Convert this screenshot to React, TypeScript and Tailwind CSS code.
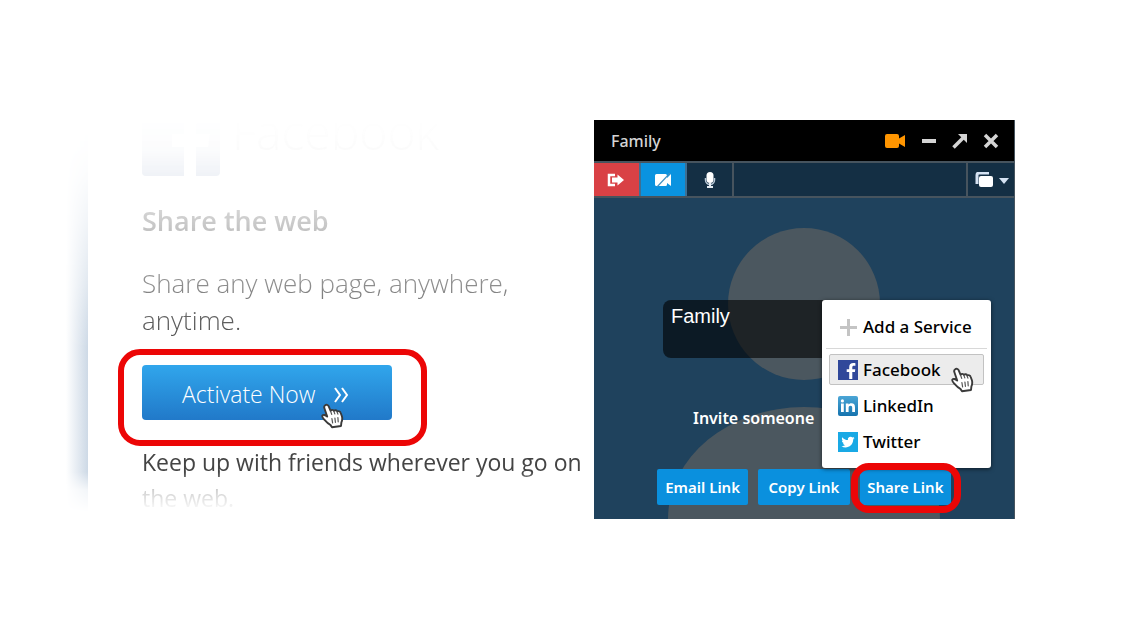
import type { ReactNode } from 'react'
import { clsx } from 'clsx'

function HandCursor({ className }: { className?: string }) {
  return (
    <svg
      viewBox="0 0 24 26"
      className={clsx('pointer-events-none absolute h-[26px] w-6', className)}
      aria-hidden="true"
    >
      <path
        d="M4.200 2.200c1.200-.9 2.800-.4 3.400 1l2 4.600c.8-1.300 2.800-1.300 3.400.1.900-1 2.700-.8 3.300.6 1.200-.8 2.900-.2 3.300 1.200l1.300 3.600c.7 2.600.4 4.200-.5 6.100l-.4 3.600-9 1.200-1.600-2.300c-2.300-1-4.200-3-6.100-5.200-1.500-1.700-2.600-2.900-2-4 .8-1.300 2.900-1 4.900.8L3.400 5.200c-.5-1.200-.2-2.300.8-3z"
        fill="#fff"
        stroke="#3a3a3a"
        strokeWidth="1.900"
        strokeLinejoin="round"
      />
      <path
        d="M9.600 8.200l1.100 3.200M12.900 8.400l.9 2.500M16.100 9l.8 2.100M10.900 15.500l.7 4.300M13.900 15l.5 4.300M16.900 14.500l.3 4.300"
        fill="none"
        stroke="#555"
        strokeWidth="1.200"
        strokeLinecap="round"
      />
    </svg>
  )
}

function FacebookIcon() {
  return (
    <svg viewBox="0 0 20 20" className="size-5 shrink-0" aria-hidden="true">
      <rect width="20" height="20" fill="#30489a" />
      <path
        d="M11.200 19v-7H8.700V9.200h2.500V7.200c0-2.900 1.500-4.200 4.200-4.200.9 0 1.600.1 2 .2v2.500h-1.500c-1.200 0-1.600.6-1.600 1.600v1.900H17.300l-.4 2.800h-2.600v7z"
        fill="#fff"
      />
    </svg>
  )
}

function LinkedInIcon() {
  return (
    <svg viewBox="0 0 20 20" className="size-5 shrink-0" aria-hidden="true">
      <defs>
        <linearGradient id="linkedin" x1="0" y1="0" x2="0" y2="1">
          <stop offset="0" stopColor="#4ba6d6" />
          <stop offset="1" stopColor="#1573ae" />
        </linearGradient>
      </defs>
      <rect width="20" height="20" rx="2" fill="url(#linkedin)" />
      <path
        d="M3 7.500h2.800V16H3zM4.400 3.300a1.600 1.600 0 1 1 0 3.200 1.600 1.600 0 0 1 0-3.200zM7.800 7.500h2.700v1.200c.5-.8 1.500-1.400 2.900-1.400 2.600 0 3.600 1.500 3.600 4.100V16h-2.800v-4.200c0-1.300-.4-2.100-1.600-2.100-1.300 0-2 .9-2 2.200V16H7.800z"
        fill="#fff"
      />
    </svg>
  )
}

function TwitterIcon() {
  return (
    <svg viewBox="0 0 20 20" className="size-5 shrink-0" aria-hidden="true">
      <rect width="20" height="20" fill="#19a9e5" />
      <path
        d="M16.500 6.100c-.5.200-1 .4-1.500.4.500-.3 1-.8 1.200-1.500-.5.300-1.100.5-1.700.6a2.700 2.700 0 0 0-4.600 2.500C7.600 8 5.600 6.900 4.300 5.200c-.8 1.300-.3 2.900.8 3.600-.4 0-.8-.1-1.200-.3 0 1.300.9 2.400 2.200 2.700-.4.100-.8.100-1.200 0 .3 1.100 1.300 1.900 2.500 1.900a5.400 5.400 0 0 1-4 1.100c4.800 3 11.800.2 11.800-6.700.5-.4 1-.8 1.300-1.400z"
        fill="#fff"
      />
    </svg>
  )
}

function PlusIcon() {
  return (
    <svg viewBox="0 0 20 20" className="size-5 shrink-0" aria-hidden="true">
      <path d="M10.500 2v17M2 10.500h17" stroke="#c4c4c4" strokeWidth="3" />
    </svg>
  )
}

const services = [
  { name: 'Facebook', icon: <FacebookIcon />, active: true },
  { name: 'LinkedIn', icon: <LinkedInIcon />, active: false },
  { name: 'Twitter', icon: <TwitterIcon />, active: false },
]

function LinkButton({ children }: { children: ReactNode }) {
  return (
    <button type="button" className="h-9 w-full rounded-xs bg-[#0a90de] text-[15px] font-semibold whitespace-nowrap">
      {children}
    </button>
  )
}

function ServiceMenu() {
  return (
    <div className="absolute -right-10 bottom-[37px] w-[169px] rounded-[3px] bg-white py-[11px] text-black shadow-[0_1px_4px_rgba(0,0,0,0.6)]">
      <button type="button" className="flex h-[31px] w-full items-center gap-[5px] pl-4 text-[17px] font-medium whitespace-nowrap">
        <PlusIcon />
        Add a Service
      </button>
      <hr className="mx-1 mt-1.5 mb-[5px] border-[#d8d8d8]" />
      <ul className="flex flex-col gap-[5px] px-[7px]">
        {services.map((service) => (
          <li key={service.name}>
            <button
              type="button"
              className={clsx(
                'flex h-[31px] w-full items-center gap-[5px] rounded-xs border pl-2 text-[17px] font-medium',
                service.active ? 'border-[#c2c2c2] bg-[#ececec]' : 'border-transparent',
              )}
            >
              {service.icon}
              {service.name}
            </button>
          </li>
        ))}
      </ul>
      <HandCursor className="top-[67px] left-[129px]" />
    </div>
  )
}

function SharePage() {
  return (
    <section className="ml-[66px] flex min-w-0 flex-1 [mask-image:linear-gradient(to_bottom,transparent_0,rgba(0,0,0,0.02)_30px,rgba(0,0,0,0.08)_56px,rgba(0,0,0,0.28)_102px,rgba(0,0,0,0.6)_164px,rgba(0,0,0,0.85)_200px,#000_228px,#000_352px,rgba(0,0,0,0.25)_370px,transparent_392px)]">
      <div className="w-[22px] shrink-0 bg-linear-to-r from-white to-[#cdd9e6]" />
      <div className="min-w-0 flex-1 pl-[54px] font-['Open_Sans',sans-serif] text-[#444]">
        <div className="flex h-14 items-end gap-3">
          <svg viewBox="0 0 78 56" className="h-14 w-[78px] shrink-0" aria-hidden="true">
            <path d="M0 0h42v14H30v13h12v29H4a4 4 0 0 1-4-4zM54 56V27h12l2-13H54V6c0-3 2-5 5-6h19v52a4 4 0 0 1-4 4z" fill="#3b5998" />
          </svg>
          <h1 className="pb-4 text-5xl leading-[56px] font-light">Facebook</h1>
        </div>
        <h2 className="mt-[25px] text-[27px] leading-10 font-semibold">Share the web</h2>
        <p className="mt-6 text-[26px] leading-[37px] font-light">
          Share any web page, anywhere,
          <br />
          anytime.
        </p>
        <div className="relative mt-[26px] w-[250px]">
          <button
            type="button"
            className="flex h-[55px] w-full items-center gap-[18px] rounded-sm bg-linear-to-b from-[#31a6ec] to-[#2179c9] pt-1 pl-10 text-[23px] font-light whitespace-nowrap text-white"
          >
            Activate Now
            <svg viewBox="0 0 16 16" className="size-4" aria-hidden="true">
              <path d="M2 1l5 7-5 7M9 1l5 7-5 7" fill="none" stroke="#fff" strokeWidth="2" />
            </svg>
          </button>
          <div className="pointer-events-none absolute -top-4 -right-[35px] -bottom-[26px] -left-6 rounded-[22px] border-6 border-[#ec0606]" />
          <HandCursor className="top-[38px] left-[179px]" />
        </div>
        <p className="mt-6 text-[23px] leading-[36px]">
          Keep up with friends wherever you go on
          <br />
          the web.
        </p>
      </div>
    </section>
  )
}

function TitleBar() {
  return (
    <header className="flex h-[41px] items-center justify-between bg-black pr-[15px] pl-[17px] text-[#d4d4d4]">
      <h2 className="text-base font-medium">Family</h2>
      <div className="flex items-center gap-[15px]">
        <button type="button" aria-label="Camera">
          <svg viewBox="0 0 22 16" className="h-4 w-[22px]">
            <path d="M3 1h10a2 2 0 0 1 2 2v2.500L21 2v12l-6-3.500V13a2 2 0 0 1-2 2H3a2 2 0 0 1-2-2V3a2 2 0 0 1 2-2z" fill="#ff9500" />
          </svg>
        </button>
        <button type="button" aria-label="Minimize">
          <svg viewBox="0 0 16 16" className="size-4">
            <path d="M1 8h14" stroke="currentColor" strokeWidth="4" />
          </svg>
        </button>
        <button type="button" aria-label="Expand">
          <svg viewBox="0 0 16 16" className="size-4">
            <path d="M1.500 14.500L12 4" stroke="currentColor" strokeWidth="3.500" />
            <path d="M6 1h9v9z" fill="currentColor" />
          </svg>
        </button>
        <button type="button" aria-label="Close">
          <svg viewBox="0 0 16 16" className="size-4">
            <path d="M2 2l12 12M14 2L2 14" stroke="currentColor" strokeWidth="3.500" />
          </svg>
        </button>
      </div>
    </header>
  )
}

function Toolbar() {
  return (
    <div className="flex h-[37px] border-y-2 border-[#47545e] bg-[#142f44]">
      <button type="button" aria-label="Leave" className="flex w-[45px] items-center justify-center bg-[#d94145]">
        <svg viewBox="0 0 18 14" className="h-3.5 w-[18px]">
          <path d="M8 2H2v10h6" fill="none" stroke="#fff" strokeWidth="2.500" />
          <path d="M5 4.500h5.500V1.500L17 7l-6.500 5.500v-3H5z" fill="#fff" />
        </svg>
      </button>
      <button type="button" aria-label="Stop video" className="flex w-12 items-center justify-center border-x-2 border-[#3f6f92] bg-[#0a93e0]">
        <svg viewBox="0 0 18 14" className="h-3.5 w-[18px]">
          <path d="M2.500 1h9A1.500 1.500 0 0 1 13 2.500V5l4-4v12l-4-3v1.500a1.500 1.500 0 0 1-1.500 1.500h-9A1.500 1.500 0 0 1 1 11.500v-9A1.500 1.500 0 0 1 2.500 1z" fill="#fff" />
          <path d="M3 14L16 0" stroke="#3f8fc0" strokeWidth="1.200" />
        </svg>
      </button>
      <button type="button" aria-label="Mute" className="flex w-[47px] items-center justify-center border-r-2 border-[#47545e] pl-0.5">
        <svg viewBox="0 0 12 18" className="h-[18px] w-3">
          <rect x="2.500" y="1" width="7" height="11" rx="3.500" fill="#fff" />
          <path d="M1.500 7v2a4.500 4.500 0 0 0 9 0V7" fill="none" stroke="#b9c8d6" strokeWidth="1.500" />
          <path d="M6 12v4M3 16h6" fill="none" stroke="#e5ecf2" strokeWidth="2" />
        </svg>
      </button>
      <button type="button" aria-label="Layout" className="ml-auto flex w-[48px] items-center justify-center gap-1 border-l-2 border-[#47545e] pl-0.5">
        <svg viewBox="0 0 19 16" className="h-4 w-[19px]">
          <path d="M2 12V3a2 2 0 0 1 2-2h10" fill="none" stroke="#d5e2f2" strokeWidth="3" />
          <rect x="4" y="4" width="14" height="11" rx="2" fill="#fff" />
        </svg>
        <svg viewBox="0 0 12 8" className="h-2 w-3">
          <path d="M1 2h10L6 8z" fill="#d5e2f2" />
        </svg>
      </button>
    </div>
  )
}

function CallWindow() {
  return (
    <section className="mr-[123px] flex w-[37%] shrink-0 flex-col border-r border-[#47545e] font-['Noto_Sans',sans-serif] text-white">
      <TitleBar />
      <Toolbar />
      <div className="relative flex flex-col items-center bg-[#1f425d] pt-[102px] pb-3.5">
        {/* placeholder avatar behind the controls */}
        <svg viewBox="0 0 272 292" className="absolute bottom-0 h-[292px] w-[272px]" aria-hidden="true">
          <circle cx="136" cy="77" r="76" fill="#4b575f" />
          <ellipse cx="136" cy="292" rx="136" ry="112" fill="#4b575f" />
        </svg>
        <div className="relative w-[294px]">
          <div className="mx-1.5 h-[58px] rounded-lg bg-black/60 px-2 pt-0.5 font-['Liberation_Sans',sans-serif] text-xl leading-7">
            Family
          </div>
          <p className="mt-12 pl-9 text-base leading-6 font-semibold">Invite someone</p>
          <div className="mt-[39px] grid grid-cols-3 gap-2.5">
            <LinkButton>Email Link</LinkButton>
            <LinkButton>Copy Link</LinkButton>
            <LinkButton>Share Link</LinkButton>
          </div>
          <ServiceMenu />
          <div className="pointer-events-none absolute -right-2.5 -bottom-2 h-[50px] w-[110px] rounded-[18px] border-7 border-[#ec0606]" />
        </div>
      </div>
    </section>
  )
}

export default function App() {
  return (
    <main className="flex min-h-screen items-start bg-white pt-[120px]">
      <SharePage />
      <CallWindow />
    </main>
  )
}
